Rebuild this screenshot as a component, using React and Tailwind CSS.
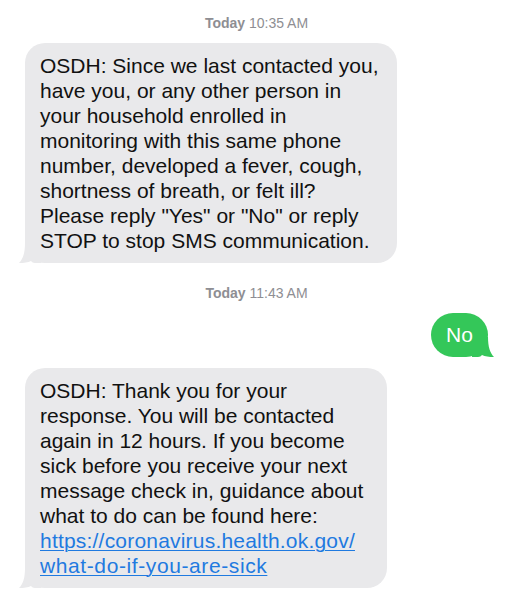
import React from "react";

const font = { fontFamily: '"Liberation Sans", Arial, sans-serif' };

const Stamp = ({ time }) => (
  <div className="text-center text-[14px] leading-4 text-[#8e8e93]">
    <span className="font-semibold">Today</span> {time}
  </div>
);

const TailLeft = ({ color }) => (
  <svg className="absolute -left-[6px] bottom-0" width="22" height="20" viewBox="0 0 22 20">
    <path d="M6 0 L22 0 L22 20 L16 20 C14 20 13 19 12 18 C9 19.5 5 20 0 20 C4 16 6 10 6 0 Z" fill={color} />
  </svg>
);

const TailRight = ({ color }) => (
  <svg className="absolute -right-[6px] bottom-0" width="22" height="20" viewBox="0 0 22 20">
    <path d="M16 0 L0 0 L0 20 L6 20 C8 20 9 19 10 18 C13 19.5 17 20 22 20 C18 16 16 10 16 0 Z" fill={color} />
  </svg>
);

const Incoming = ({ lines, className }) => (
  <div className={`relative self-start ml-[25px] rounded-[20px] bg-[#e9e9eb] pl-[15px] pr-[12px] py-[10px] ${className}`}>
    <TailLeft color="#e9e9eb" />
    <div className="relative text-[21px] leading-[25px] text-[#111]">
      {lines.map((l, i) => (
        <div key={i} className="whitespace-nowrap">{l}</div>
      ))}
    </div>
  </div>
);

const linkCls = "text-[#1f7ae0] underline decoration-1 underline-offset-2";

export default function App() {
  return (
    <div className="w-[513px] h-[600px] bg-white overflow-hidden flex flex-col pt-[15px]" style={font}>
      <Stamp time="10:35 AM" />
      <Incoming
        className="mt-[12px] w-[372px]"
        lines={[
          "OSDH: Since we last contacted you,",
          "have you, or any other person in",
          "your household enrolled in",
          "monitoring with this same phone",
          "number, developed a fever, cough,",
          "shortness of breath, or felt ill?",
          'Please reply "Yes" or "No" or reply',
          "STOP to stop SMS communication.",
        ]}
      />
      <div className="mt-[22px]">
        <Stamp time="11:43 AM" />
      </div>
      <div className="relative self-end mr-[25px] mt-[12px] w-[57px] h-[44px] rounded-[22px] bg-[#34c759] flex items-center justify-center">
        <TailRight color="#34c759" />
        <span className="relative text-[21px] text-white">No</span>
      </div>
      <Incoming
        className="mt-[11px] w-[362px]"
        lines={[
          "OSDH: Thank you for your",
          "response. You will be contacted",
          "again in 12 hours. If you become",
          "sick before you receive your next",
          "message check in, guidance about",
          "what to do can be found here:",
          <a className={`${linkCls} tracking-[0.2px]`} href="#">https://coronavirus.health.ok.gov/</a>,
          <a className={`${linkCls} tracking-[0.6px]`} href="#">what-do-if-you-are-sick</a>,
        ]}
      />
    </div>
  );
}
